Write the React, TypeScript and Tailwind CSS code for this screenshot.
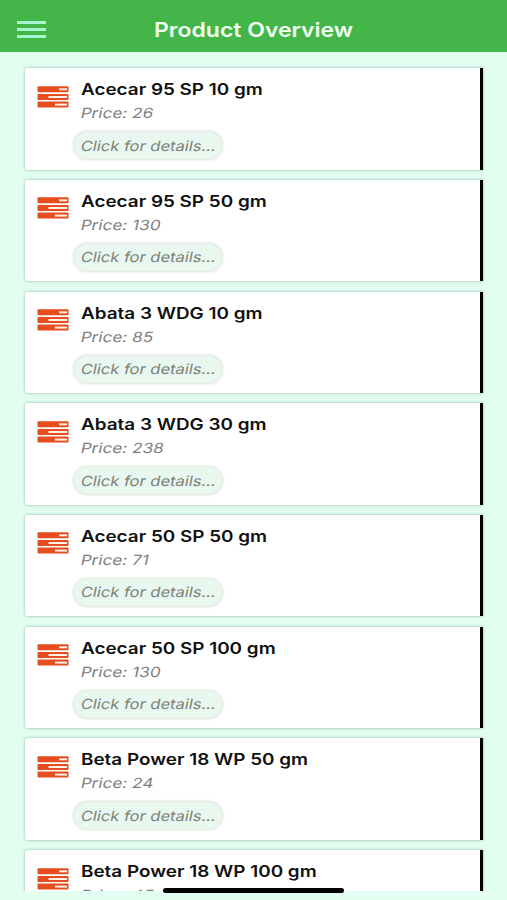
interface Product {
  name: string;
  price: number;
}

const products: Product[] = [
  { name: 'Acecar 95 SP 10 gm', price: 26 },
  { name: 'Acecar 95 SP 50 gm', price: 130 },
  { name: 'Abata 3 WDG 10 gm', price: 85 },
  { name: 'Abata 3 WDG 30 gm', price: 238 },
  { name: 'Acecar 50 SP 50 gm', price: 71 },
  { name: 'Acecar 50 SP 100 gm', price: 130 },
  { name: 'Beta Power 18 WP 50 gm', price: 24 },
  { name: 'Beta Power 18 WP 100 gm', price: 45 },
];

function TasksIcon() {
  return (
    <svg className="mt-[17.5px] ml-3 h-[22px] w-8 shrink-0" viewBox="0 0 32 22" aria-hidden="true">
      <g fill="#e64d1f">
        <rect x="0.5" y="0.3" width="31" height="6" rx="1" />
        <rect x="0.5" y="8" width="31" height="6" rx="1" />
        <rect x="0.5" y="15.6" width="31" height="6" rx="1" />
      </g>
      <g fill="#fff0e8">
        <rect x="22.2" y="2.3" width="7.8" height="2" />
        <rect x="11.5" y="10" width="18.5" height="2" />
        <rect x="18" y="17.6" width="12" height="2" />
      </g>
    </svg>
  );
}

function ProductCard({ product }: { product: Product }) {
  return (
    <div className="flex h-[101.5px] shrink-0 rounded-l-[2px] bg-white shadow-[0_0_3px_rgba(0,50,35,0.4)]">
      <TasksIcon />
      <div className="ml-3 flex flex-1 flex-col items-start whitespace-nowrap">
        <h2 className="mt-[11px] origin-left scale-x-[1.18] text-[16px] leading-5 font-[560] text-[#111]">
          {product.name}
        </h2>
        {/* Slanted upright glyphs, so the letters keep their roman shapes */}
        <p className="mt-1 origin-left [transform:scaleX(1.225)_skewX(-10deg)] text-[14px] leading-5 text-[#808080]">
          Price: {product.price}
        </p>
        <button className="mt-2 -ml-2 flex h-[29px] w-[150px] items-center rounded-full border border-[#e9e9e5] bg-[#e9f8ee] pl-[7px] shadow-[0_0_3px_rgba(0,0,0,0.12)]">
          <span className="origin-left [transform:scaleX(1.18)_skewX(-10deg)] text-[14px] leading-5 text-[#7a827c]">
            Click for details...
          </span>
        </button>
      </div>
      <div className="w-[2.6px] bg-black" />
    </div>
  );
}

export default function App() {
  return (
    <div className="relative flex h-[900px] w-[507px] flex-col overflow-hidden bg-[#e2fef0] font-[Inter,'Liberation_Sans',sans-serif]">
      <header className="grid h-[52px] shrink-0 grid-cols-[1fr_auto_1fr] items-center bg-[#44b649] pt-[7px]">
        <button className="ml-[17px] flex w-[28.5px] flex-col gap-[4.5px]" aria-label="Menu">
          <span className="h-[2.5px] bg-[#a8f5d0]" />
          <span className="h-[2.5px] bg-[#a8f5d0]" />
          <span className="h-[2.5px] bg-[#a8f5d0]" />
        </button>
        <h1 className="scale-x-[1.15] text-[20px] leading-6 font-semibold text-[#effff0]">
          Product Overview
        </h1>
      </header>
      <main className="flex h-[838.5px] shrink-0 flex-col gap-[10.2px] overflow-hidden pt-[16.2px] pr-6 pl-[25px]">
        {products.map((product) => (
          <ProductCard key={product.name} product={product} />
        ))}
      </main>
      {/* Home indicator */}
      <div className="absolute top-[887.5px] left-[163.4px] h-[5px] w-[181px] rounded-full bg-black" />
    </div>
  );
}
